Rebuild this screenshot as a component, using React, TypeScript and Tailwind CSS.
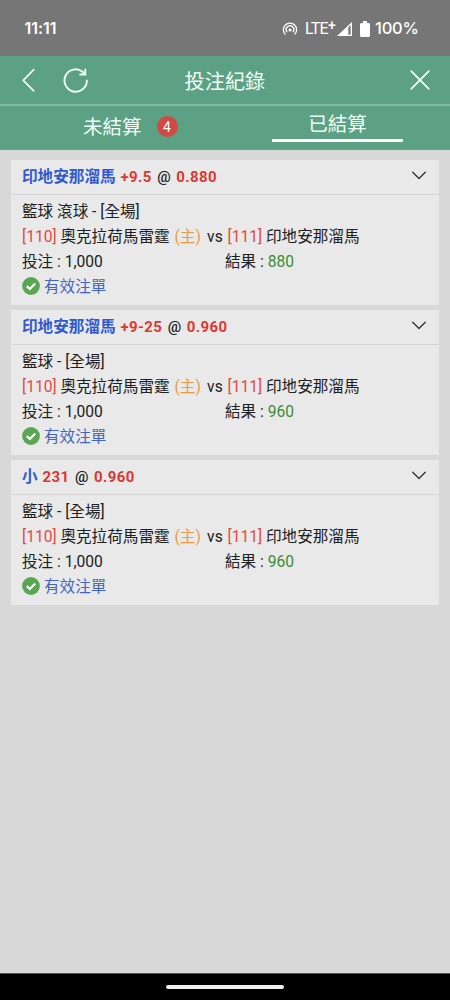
interface Bet {
  pick: string;
  line: string;
  odds: string;
  sport: string;
  result: string;
}

const bets: Bet[] = [
  { pick: "印地安那溜馬", line: "+9.5", odds: "0.880", sport: "籃球 滾球 - [全場]", result: "880" },
  { pick: "印地安那溜馬", line: "+9-25", odds: "0.960", sport: "籃球 - [全場]", result: "960" },
  { pick: "小", line: "231", odds: "0.960", sport: "籃球 - [全場]", result: "960" },
];

function StatusBar() {
  return (
    <div className="flex h-14 shrink-0 items-center bg-[#767676] pt-px pr-8 pl-[24.5px] font-['Inter','Roboto',sans-serif] text-white">
      <span className="mb-[2px] text-[16px] leading-none font-semibold tracking-[-0.05px]">11:11</span>
      <svg className="ml-auto" width="16" height="14" viewBox="0 0 16 14" fill="none" stroke="white" strokeWidth="1.3" strokeLinecap="round">
        <path d="M3.1 12.1A6.6 6.6 0 1 1 12.9 12.1" />
        <path d="M4.9 9.8A3.8 3.8 0 1 1 11.1 9.8" />
        <circle cx="8" cy="8" r="1.5" fill="white" stroke="none" />
      </svg>
      <span className="ml-[7px] flex w-[31px] font-['Roboto',sans-serif] text-[16px] leading-none font-normal tracking-[-0.7px]">
        LTE<span className="relative -top-[3px] text-[14px] font-medium">+</span>
      </span>
      <svg className="ml-px" width="15" height="14" viewBox="0 0 15 14">
        <path d="M0 14L15 0V14Z" fill="white" />
        <path d="M11.3 5.3L13.6 3.2V12.7H11.3Z" fill="#767676" />
      </svg>
      <svg className="ml-2" width="10" height="16" viewBox="0 0 10 16" fill="white">
        <path d="M3 0H7V2H8.5Q10 2 10 3.5V14.5Q10 16 8.5 16H1.5Q0 16 0 14.5V3.5Q0 2 1.5 2H3Z" />
      </svg>
      <span className="ml-[5px] w-[43px] text-[16.5px] leading-none font-medium tracking-[-0.2px]">100%</span>
    </div>
  );
}

function Header() {
  return (
    <header className="shrink-0 bg-[#5da184] text-[#f0fff8]">
      <div className="flex h-[50px] items-center border-b-2 border-[#83bba2] pr-5 pl-[21px]">
        <svg width="15" height="24" viewBox="0 0 15 24" fill="none" stroke="currentColor" strokeWidth="1.7" strokeLinecap="round" strokeLinejoin="round">
          <path d="M12.7 1.7L2.2 12.3L12.7 22.8" />
        </svg>
        <svg className="ml-[27px]" width="26" height="26" viewBox="0 0 26 26" fill="none" stroke="currentColor" strokeWidth="1.9" strokeLinecap="round" strokeLinejoin="miter">
          <path d="M23.9 13.5A11.2 11.2 0 1 1 19.6 4.7L21.8 7" />
          <path d="M22.3 2.4V7.5H17.2" />
        </svg>
        <h1 className="ml-[95.5px] pt-[3px] text-[20.2px] leading-6 font-normal">投注紀錄</h1>
        <svg className="ml-auto" width="20" height="20" viewBox="0 0 20 20" fill="none" stroke="currentColor" strokeWidth="1.8" strokeLinecap="round">
          <path d="M1.2 1.2L18.8 18.8M18.8 1.2L1.2 18.8" />
        </svg>
      </div>
      <nav className="flex h-[44px] text-[19.5px]">
        <div className="flex w-1/2 items-center pl-[83px] pb-[3px]">
          <span className="pt-[3px] leading-6">未結算</span>
          <span className="ml-[15px] flex size-[21px] items-center justify-center rounded-full bg-[#d04a43] text-[14px] leading-none">4</span>
        </div>
        <div className="flex w-1/2 justify-center">
          <div className="flex h-9 w-[131px] justify-center border-b-3 border-white pt-[7px]">
            <span className="leading-6">已結算</span>
          </div>
        </div>
      </nav>
    </header>
  );
}

function BetCard({ bet }: { bet: Bet }) {
  return (
    <article className="h-[145px] bg-[#e9e9e9] text-[15.6px] whitespace-pre text-[#202020]">
      <div className="flex h-[35px] items-center justify-between border-b border-[#d5d5d5] pr-3 pl-[11px]">
        <div className="flex items-baseline leading-6 font-bold">
          <span className="text-[#3059cf]">{bet.pick}</span>
          <span className="ml-[5px] text-[15px] tracking-[0.35px] text-[#dc3832]">{bet.line}</span>
          <span className="mx-[5.5px] text-[15px] font-medium">@</span>
          <span className="text-[15px] tracking-[0.4px] text-[#dc3832]">{bet.odds}</span>
        </div>
        <svg className="mb-1" width="16" height="9" viewBox="0 0 16 9" fill="none" stroke="#303030" strokeWidth="1.3" strokeLinecap="round" strokeLinejoin="round">
          <path d="M1.7 1.3L8 7.5L14.3 1.3" />
        </svg>
      </div>
      <div className="px-[11px] pt-[5px] leading-[25px]">
        <div>{bet.sport}</div>
        <div>
          <span className="text-[#df4945]">[110]</span> 奧克拉荷馬雷霆 <span className="ml-px text-[#e99a45]">(主)</span>
          <span className="-ml-[1.5px]">{"  vs "}</span>
          <span className="ml-px text-[#df4945]">[111]</span> 印地安那溜馬
        </div>
        <div className="grid grid-cols-2">
          <span>投注 : 1,000</span>
          <span>
            結果 : <span className="text-[#3b8b37]">{bet.result}</span>
          </span>
        </div>
        <div className="flex items-center text-[#4365bd]">
          <svg className="mr-1 mb-[3px]" width="18" height="18" viewBox="0 0 18 18">
            <circle cx="9" cy="9" r="8.9" fill="#5aa653" />
            <path d="M4.8 9.1L7.8 12L13.2 6.5" fill="none" stroke="white" strokeWidth="2.2" />
          </svg>
          有效注單
        </div>
      </div>
    </article>
  );
}

export default function App() {
  return (
    <div className="flex h-[1000px] w-[450px] flex-col overflow-hidden bg-[#d8d8d8] font-['Roboto','Noto_Sans_CJK_TC',sans-serif]">
      <StatusBar />
      <Header />
      <main className="flex flex-1 flex-col gap-[5px] px-[11px] pt-[10px]">
        {bets.map((bet, i) => (
          <BetCard key={i} bet={bet} />
        ))}
      </main>
      <footer className="flex h-[27px] shrink-0 items-center justify-center border-t border-[#555] bg-black">
        <div className="h-1 w-[118px] rounded-full bg-[#eeeeee]" />
      </footer>
    </div>
  );
}
